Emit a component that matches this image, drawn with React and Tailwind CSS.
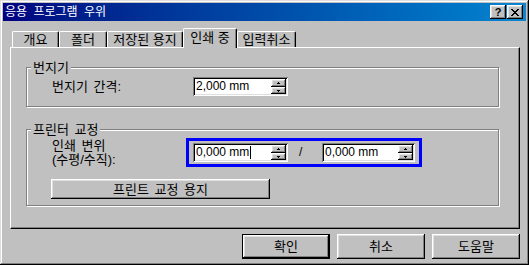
import React from "react";

const raised =
  "shadow-[inset_-1px_-1px_#000,inset_1px_1px_#fff,inset_-2px_-2px_#808080,inset_2px_2px_#dfdfdf]";
const sunken =
  "shadow-[inset_1px_1px_#808080,inset_-1px_-1px_#fff,inset_2px_2px_#000,inset_-2px_-2px_#dfdfdf]";

function Arrow({ up }) {
  return (
    <svg width="3" height="2" viewBox="0 0 3 2" shapeRendering="crispEdges">
      {up ? (
        <>
          <rect x="1" y="0" width="1" height="1" fill="#000" />
          <rect x="0" y="1" width="3" height="1" fill="#000" />
        </>
      ) : (
        <>
          <rect x="0" y="0" width="3" height="1" fill="#000" />
          <rect x="1" y="1" width="1" height="1" fill="#000" />
        </>
      )}
    </svg>
  );
}

function Spin({ value, width, caret }) {
  return (
    <div
      className={`flex h-[19px] bg-white p-[2px] ${sunken}`}
      style={{ width }}
    >
      <div className="flex flex-1 items-center pl-[1px] text-[12px] leading-[15px] text-black">
        <span>{value}</span>
        {caret && <span className="ml-[1px] inline-block h-[13px] w-px bg-black" />}
      </div>
      <div className="flex w-[15px] flex-col">
        <div className={`flex h-[8px] items-center justify-center bg-[#c0c0c0] ${raised}`}>
          <Arrow up />
        </div>
        <div className={`flex h-[7px] items-center justify-center bg-[#c0c0c0] ${raised}`}>
          <Arrow />
        </div>
      </div>
    </div>
  );
}

function Tab({ label, w, selected }) {
  return (
    <div
      className={
        selected
          ? "relative -mb-px flex h-[20px] items-start justify-center rounded-t-[2px] border-l border-t border-r border-white border-r-black bg-[#c0c0c0] pt-[1px] leading-[15px] shadow-[inset_-1px_0_#808080]"
          : "flex h-[16px] items-start justify-center rounded-t-[2px] border-l border-t border-r border-white border-r-black bg-[#c0c0c0] pt-0 leading-[15px] shadow-[inset_-1px_0_#808080]"
      }
      style={{ width: w }}
    >
      {label}
    </div>
  );
}

export default function App() {
  return (
    <div
      className={`flex h-[265px] w-[529px] flex-col bg-[#c0c0c0] p-[3px] font-['Liberation_Sans','Noto_Sans_CJK_KR',sans-serif] text-[13px] text-black ${"shadow-[inset_-1px_-1px_#000,inset_1px_1px_#dfdfdf,inset_-2px_-2px_#808080,inset_2px_2px_#fff]"}`}
    >
      {/* Title bar */}
      <div className="flex h-[18px] items-center bg-gradient-to-r from-[#000080] to-[#1084d0] pl-[2px] pr-[3px]">
        <span className="flex-1 text-[12px] leading-[16px] text-white [word-spacing:3px]">응용 프로그램 우위</span>
        <div className={`flex h-[14px] w-[16px] items-center justify-center bg-[#c0c0c0] ${raised}`}>
          <span className="text-[11px] font-bold leading-[12px]">?</span>
        </div>
        <div className={`ml-px flex h-[14px] w-[16px] items-center justify-center bg-[#c0c0c0] ${raised}`}>
          <svg width="8" height="7" viewBox="0 0 8 7" shapeRendering="crispEdges">
            <path d="M0 0h2v1h-2zM6 0h2v1h-2zM1 1h2v1h-2zM5 1h2v1h-2zM2 2h4v1h-4zM3 3h2v1h-2zM2 4h4v1h-4zM1 5h2v1h-2zM5 5h2v1h-2zM0 6h2v1h-2zM6 6h2v1h-2z" fill="#000" />
          </svg>
        </div>
      </div>

      <div className="flex flex-1 flex-col pl-[7px] pr-[6px] pt-[7px]">
        {/* Tabs */}
        <div className="relative z-10 flex h-[19px] items-end pl-[2px]">
          <Tab label="개요" w={47} />
          <Tab label="폴더" w={48} />
          <Tab label="저장된 용지" w={76} />
          <Tab label="인쇄 중" w={54} selected />
          <Tab label="입력취소" w={59} />
        </div>

        {/* Panel */}
        <div className="h-[182px] border-l border-t border-r border-b border-white border-r-black border-b-black pl-[15px] shadow-[inset_-1px_-1px_#808080]">
          {/* Group 1 */}
          <div className="relative mt-[19px] h-[40px] w-[473px] border border-[#808080] shadow-[inset_1px_1px_#fff,1px_1px_#fff]">
            <span className="absolute left-[4px] top-[-8px] bg-[#c0c0c0] px-[2px] leading-[15px]">
              번지기
            </span>
            <div className="flex items-center pl-[25px] pt-[9px]">
              <span className="w-[141px] leading-[15px] [word-spacing:2px]">번지기 간격:</span>
              <Spin value="2,000 mm" width={95} />
            </div>
          </div>

          {/* Group 2 */}
          <div className="relative mt-[22px] h-[77px] w-[473px] border border-[#808080] shadow-[inset_1px_1px_#fff,1px_1px_#fff]">
            <span className="absolute left-[4px] top-[-8px] bg-[#c0c0c0] px-[2px] leading-[15px] [word-spacing:2px]">
              프린터 교정
            </span>
            <div className="flex items-center pl-[25px] pt-[8px]">
              <div className="flex w-[134px] flex-col leading-[14px] [word-spacing:2px]">
                <span>인쇄 변위</span>
                <span>(수평/수직):</span>
              </div>
              <div className="flex h-[29px] items-center border-[3px] border-[#0000ff] px-[4px]">
                <Spin value="0,000 mm" width={95} caret />
                <span className="w-[34px] pl-[11px] text-[12px] leading-[15px]">/</span>
                <Spin value="0,000 mm" width={93} />
              </div>
            </div>
            <div className="pl-[24px] pt-[12px]">
              <div className={`flex h-[20px] w-[219px] items-center justify-center bg-[#c0c0c0] leading-[15px] [word-spacing:2px] ${raised}`}>
                프린트 교정 용지
              </div>
            </div>
          </div>
        </div>

        {/* Bottom buttons */}
        <div className="mt-[5px] flex justify-end gap-[7px]">
          <div className="flex h-[25px] w-[88px] items-center justify-center border border-black bg-[#c0c0c0] leading-[15px] shadow-[inset_-1px_-1px_#000,inset_1px_1px_#fff,inset_-2px_-2px_#808080,inset_2px_2px_#dfdfdf]">
            확인
          </div>
          <div className={`flex h-[25px] w-[88px] items-center justify-center bg-[#c0c0c0] leading-[15px] ${raised}`}>
            취소
          </div>
          <div className={`flex h-[25px] w-[88px] items-center justify-center bg-[#c0c0c0] leading-[15px] ${raised}`}>
            도움말
          </div>
        </div>
      </div>
    </div>
  );
}
